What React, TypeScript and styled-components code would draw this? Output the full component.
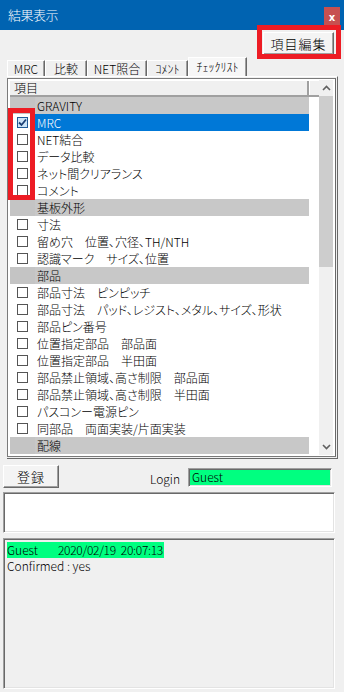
import React from "react";
import styled, { createGlobalStyle } from "styled-components";

const GlobalStyle = createGlobalStyle`
  html, body { margin: 0; padding: 0; background: #f0f0f0; }
  * { box-sizing: border-box; }
`;

const FONT = `"Noto Sans CJK JP", "Noto Sans", sans-serif`;

const Window = styled.div`
  position: relative;
  width: 344px;
  height: 692px;
  background: #f0f0f0;
  display: flex;
  flex-direction: column;
  font-family: ${FONT};
  font-feature-settings: "palt";
  font-weight: 300;
  font-size: 12px;
  color: #000;
  overflow: hidden;
`;

const TitleBar = styled.div`
  height: 30px;
  flex: none;
  background: #0063b1;
  display: flex;
  align-items: flex-start;
  justify-content: space-between;
  padding: 0 4px 0 8px;
`;

const TitleText = styled.div`
  color: #fff;
  font-size: 13px;
  line-height: 30px;
  letter-spacing: -0.5px;
`;

const CloseButton = styled.div`
  width: 16px;
  height: 20px;
  margin-top: 7px;
  background: #c75050;
  color: #fff;
  font-family: "DejaVu Sans", sans-serif;
  font-weight: bold;
  font-size: 10px;
  display: flex;
  align-items: center;
  justify-content: center;
`;

const ActionBar = styled.div`
  height: 27px;
  flex: none;
  display: flex;
  justify-content: flex-end;
  padding: 2px 10px 0 0;
`;

const RaisedButton = styled.button<{ $w: number; $h: number; $size?: number }>`
  width: ${(p) => p.$w}px;
  height: ${(p) => p.$h}px;
  margin: 0;
  padding: 0;
  background: #f4f4f4;
  border: 1px solid;
  border-color: #ffffff #696969 #696969 #ffffff;
  box-shadow: inset -1px -1px 0 #a0a0a0;
  font-family: ${FONT};
  font-weight: 300;
  font-size: ${(p) => p.$size ?? 13}px;
  color: #000;
  display: flex;
  align-items: center;
  justify-content: center;
  letter-spacing: 1px;
`;

const TabStrip = styled.div`
  height: 19px;
  flex: none;
  display: flex;
  align-items: flex-end;
  padding-left: 7px;
`;

const Tab = styled.div<{ $w: number; $active?: boolean }>`
  width: ${(p) => p.$w}px;
  height: ${(p) => (p.$active ? 19 : 16)}px;
  background: ${(p) => (p.$active ? "#f7f7f7" : "#f0f0f0")};
  border-top: 1px solid #ffffff;
  border-left: 1px solid #ffffff;
  border-right: 1px solid #696969;
  box-shadow: inset -1px 0 0 #a0a0a0;
  display: flex;
  align-items: center;
  justify-content: center;
  font-size: 12px;
  line-height: 1;
  white-space: nowrap;
`;

const Panel = styled.div`
  margin-left: 7px;
  width: 331px;
  height: 383px;
  flex: none;
  border-top: 1px solid #ffffff;
  border-right: 1px solid #696969;
  border-bottom: 1px solid #696969;
  padding-top: 1px;
`;

const ListBox = styled.div`
  width: 329px;
  height: 379px;
  border: 1px solid #7a7a7a;
  border-right-color: #696969;
  background: #ffffff;
  padding: 1px 2px 1px 2px;
  display: flex;
`;

const MainColumn = styled.div`
  width: 309px;
  display: flex;
  flex-direction: column;
`;

const HeaderRow = styled.div`
  height: 17px;
  display: flex;
  background: #f0f0f0;
  border-top: 1px solid #ffffff;
  border-bottom: 2px solid #a0a0a0;
`;

const HeaderCell = styled.div`
  width: 299px;
  height: 100%;
  border-right: 2px solid #a0a0a0;
  box-shadow: 1px 0 0 #ffffff;
  padding-left: 4px;
  font-size: 12px;
  line-height: 14px;
`;

const Row = styled.div`
  height: 17px;
  width: 299px;
  display: flex;
  flex: none;
`;

const CheckCell = styled.div<{ $group?: boolean }>`
  width: 25px;
  height: 100%;
  background: ${(p) => (p.$group ? "#c4c4c4" : "#ffffff")};
  display: flex;
  align-items: center;
  padding-left: 7px;
`;

const TextCell = styled.div<{ $group?: boolean; $selected?: boolean }>`
  flex: 1;
  height: 100%;
  padding-left: 2px;
  background: ${(p) => (p.$selected ? "#0078d7" : p.$group ? "#c8c8c8" : "transparent")};
  color: ${(p) => (p.$selected ? "#ffffff" : "#000000")};
  font-size: 12px;
  line-height: 17px;
  white-space: nowrap;
  overflow: hidden;
`;

const Box = styled.span<{ $checked?: boolean }>`
  width: 11px;
  height: 11px;
  border: 1px solid ${(p) => (p.$checked ? "#1f5a96" : "#555555")};
  background: ${(p) => (p.$checked ? "#cce4f7" : "#ffffff")};
  display: flex;
  align-items: center;
  justify-content: center;
`;

const ScrollBar = styled.div`
  width: 14px;
  display: flex;
  flex-direction: column;
  background: #f0f0f0;
`;

const ScrollArrow = styled.div`
  height: 16px;
  flex: none;
  display: flex;
  align-items: center;
  justify-content: center;
`;

const Thumb = styled.div`
  height: 171px;
  flex: none;
  background: #cdcdcd;
`;

const Track = styled.div`
  flex: 1;
`;

const BottomRow = styled.div`
  margin-top: 6px;
  height: 23px;
  flex: none;
  display: flex;
  align-items: center;
  padding: 0 12px 0 3px;
`;

const LoginLabel = styled.span`
  margin-left: auto;
  margin-right: 8px;
  font-size: 12px;
  padding-top: 4px;
`;

const sunken = `
  border: 1px solid;
  border-color: #a0a0a0 #ffffff #ffffff #a0a0a0;
  box-shadow: inset 1px 1px 0 #696969, inset -1px -1px 0 #e3e3e3;
`;

const LoginField = styled.div`
  width: 144px;
  height: 19px;
  margin-top: 2px;
  background: #00ff80;
  ${sunken}
  padding-left: 3px;
  font-size: 12px;
  line-height: 16px;
`;

const Memo = styled.div`
  margin: 4px 9px 0 3px;
  height: 41px;
  flex: none;
  background: #ffffff;
  ${sunken}
`;

const Log = styled.div`
  margin: 5px 9px 0 3px;
  height: 151px;
  flex: none;
  background: #f0f0f0;
  ${sunken}
  padding: 3px 0 0 3px;
  font-size: 12px;
  line-height: 16px;
`;

const LogLine = styled.div<{ $highlight?: boolean }>`
  display: block;
  width: fit-content;
  background: ${(p) => (p.$highlight ? "#00ff80" : "transparent")};
  white-space: nowrap;
  padding-right: 1px;
`;

const LogUser = styled.span`
  display: inline-block;
  width: 51px;
`;

const LogStamp = styled.span<{ $gap?: number }>`
  display: inline-block;
  margin-left: ${(p) => p.$gap ?? 0}px;
  letter-spacing: -0.3px;
`;

const Annotation = styled.div<{ $x: number; $y: number; $w: number; $h: number }>`
  position: absolute;
  left: ${(p) => p.$x}px;
  top: ${(p) => p.$y}px;
  width: ${(p) => p.$w}px;
  height: ${(p) => p.$h}px;
  border: 5px solid #ed1c24;
  pointer-events: none;
`;

type Item = { label: string; group?: boolean; checked?: boolean; selected?: boolean };

const items: Item[] = [
  { label: "GRAVITY", group: true },
  { label: "MRC", checked: true, selected: true },
  { label: "NET結合" },
  { label: "データ比較" },
  { label: "ネット間クリアランス" },
  { label: "コメント" },
  { label: "基板外形", group: true },
  { label: "寸法" },
  { label: "留め穴　位置、穴径、TH/NTH" },
  { label: "認識マーク　サイズ、位置" },
  { label: "部品", group: true },
  { label: "部品寸法　ピンピッチ" },
  { label: "部品寸法　パッド、レジスト、メタル、サイズ、形状" },
  { label: "部品ピン番号" },
  { label: "位置指定部品　部品面" },
  { label: "位置指定部品　半田面" },
  { label: "部品禁止領域、高さ制限　部品面" },
  { label: "部品禁止領域、高さ制限　半田面" },
  { label: "パスコンー電源ピン" },
  { label: "同部品　両面実装/片面実装" },
  { label: "配線", group: true },
];

const tabs = [
  { label: "MRC", w: 38 },
  { label: "比較", w: 42 },
  { label: "NET照合", w: 60 },
  { label: "ｺﾒﾝﾄ", w: 41 },
  { label: "ﾁｪｯｸﾘｽﾄ", w: 59, active: true },
];

const Chevron = ({ up }: { up?: boolean }) => (
  <svg width="9" height="6" viewBox="0 0 9 6">
    <polyline
      points={up ? "1,5 4.5,1.5 8,5" : "1,1 4.5,4.5 8,1"}
      fill="none"
      stroke="#606060"
      strokeWidth="1.6"
    />
  </svg>
);

const CheckMark = () => (
  <svg width="9" height="9" viewBox="0 0 9 9">
    <polyline points="1,4.5 3.5,7 8,1.5" fill="none" stroke="#1a3f73" strokeWidth="1.8" />
  </svg>
);

export default function App() {
  return (
    <>
      <GlobalStyle />
      <Window>
        <TitleBar>
          <TitleText>結果表示</TitleText>
          <CloseButton>x</CloseButton>
        </TitleBar>
        <ActionBar>
          <RaisedButton $w={71} $h={23} $size={13}>
            項目編集
          </RaisedButton>
        </ActionBar>
        <TabStrip>
          {tabs.map((t) => (
            <Tab key={t.label} $w={t.w} $active={t.active}>
              {t.label}
            </Tab>
          ))}
        </TabStrip>
        <Panel>
          <ListBox>
            <MainColumn>
              <HeaderRow>
                <HeaderCell>項目</HeaderCell>
              </HeaderRow>
              {items.map((it) => (
                <Row key={it.label}>
                  <CheckCell $group={it.group}>
                    {!it.group && <Box $checked={it.checked}>{it.checked && <CheckMark />}</Box>}
                  </CheckCell>
                  <TextCell $group={it.group} $selected={it.selected}>
                    {it.label}
                  </TextCell>
                </Row>
              ))}
            </MainColumn>
            <ScrollBar>
              <ScrollArrow>
                <Chevron up />
              </ScrollArrow>
              <Thumb />
              <Track />
              <ScrollArrow>
                <Chevron />
              </ScrollArrow>
            </ScrollBar>
          </ListBox>
        </Panel>
        <BottomRow>
          <RaisedButton $w={56} $h={23} $size={13}>
            登録
          </RaisedButton>
          <LoginLabel>Login</LoginLabel>
          <LoginField>Guest</LoginField>
        </BottomRow>
        <Memo />
        <Log>
          <LogLine $highlight>
            <LogUser>Guest</LogUser>
            <LogStamp>2020/02/19</LogStamp>
            <LogStamp $gap={5}>20:07:13</LogStamp>
          </LogLine>
          <LogLine>Confirmed : yes</LogLine>
        </Log>
        <Annotation $x={257} $y={25} $w={84} $h={34} />
        <Annotation $x={8} $y={108} $w={27} $h={92} />
      </Window>
    </>
  );
}
